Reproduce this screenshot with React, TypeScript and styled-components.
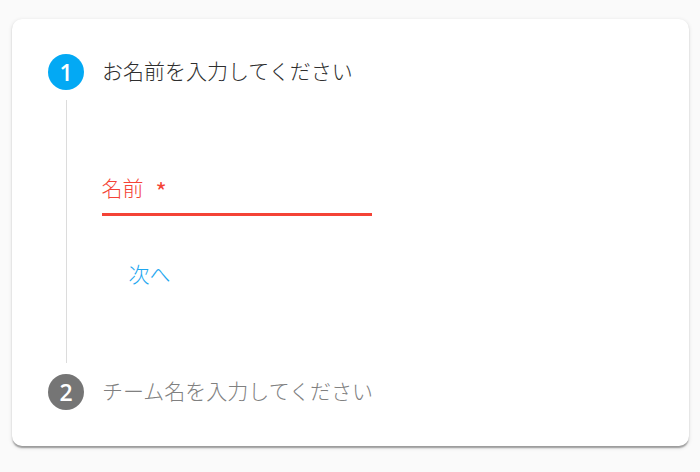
import React from "react";
import styled, { createGlobalStyle } from "styled-components";

const GlobalStyle = createGlobalStyle`
    html, body {
        margin: 0;
        padding: 0;
        background: #fafafa;
    }
    body {
        font-family: "Noto Sans CJK JP", "Noto Sans", sans-serif;
    }
`;

const Page = styled.div`
    padding: 19px 11px 26px 12px;
`;

const Card = styled.div`
    background: #fff;
    border-radius: 10px;
    padding: 35px 36px 36px;
    box-shadow: 0 3px 1.5px -1.5px rgba(0, 0, 0, 0.2),
        0 1.5px 1.5px 0 rgba(0, 0, 0, 0.14),
        0 1.5px 4.5px 0 rgba(0, 0, 0, 0.12);
`;

const StepRow = styled.div`
    display: flex;
    align-items: center;
    height: 36px;
`;

const StepIcon = styled.div<{ $active?: boolean }>`
    width: 36px;
    height: 36px;
    border-radius: 50%;
    flex-shrink: 0;
    display: flex;
    align-items: center;
    justify-content: center;
    background: ${p => (p.$active ? "#03a9f4" : "#757575")};
    color: #fff;
    font-family: "Open Sans", "Noto Sans", sans-serif;
    font-size: 23px;
    font-weight: 600;
`;

const StepLabel = styled.span<{ $active?: boolean }>`
    margin-left: 18px;
    padding-bottom: 4px;
    font-size: 21px;
    font-weight: 300;
    line-height: 30px;
    color: ${p => (p.$active ? "#2e2e2e" : "#808080")};
`;

const StepContent = styled.div`
    margin: 10px 0 11px 18px;
    border-left: 1.5px solid #dcdcdc;
    padding: 70px 0 0 34.5px;
    height: 193px;
`;

const Field = styled.div`
    width: 270px;
    height: 41px;
    border-bottom: 3px solid #f44336;
`;

const FieldLabel = styled.div`
    margin-top: 2px;
    font-size: 21px;
    font-weight: 300;
    line-height: 30px;
    color: #f44336;
`;

const Asterisk = styled.span`
    margin-left: 12px;
    font-size: 24px;
    font-weight: 400;
    vertical-align: -5px;
`;

const TextButton = styled.button`
    margin-top: 30px;
    min-width: 96px;
    height: 54px;
    padding: 9px 12px;
    border: none;
    background: transparent;
    color: #1ea7f0;
    font-family: inherit;
    font-size: 21px;
    font-weight: 300;
    cursor: pointer;
`;

export default function App() {
    return (
        <Page>
            <GlobalStyle />
            <Card>
                <StepRow>
                    <StepIcon $active>1</StepIcon>
                    <StepLabel $active>お名前を入力してください</StepLabel>
                </StepRow>
                <StepContent>
                    <Field>
                        <FieldLabel>
                            名前<Asterisk>*</Asterisk>
                        </FieldLabel>
                    </Field>
                    <TextButton>次へ</TextButton>
                </StepContent>
                <StepRow>
                    <StepIcon>2</StepIcon>
                    <StepLabel>チーム名を入力してください</StepLabel>
                </StepRow>
            </Card>
        </Page>
    );
}
